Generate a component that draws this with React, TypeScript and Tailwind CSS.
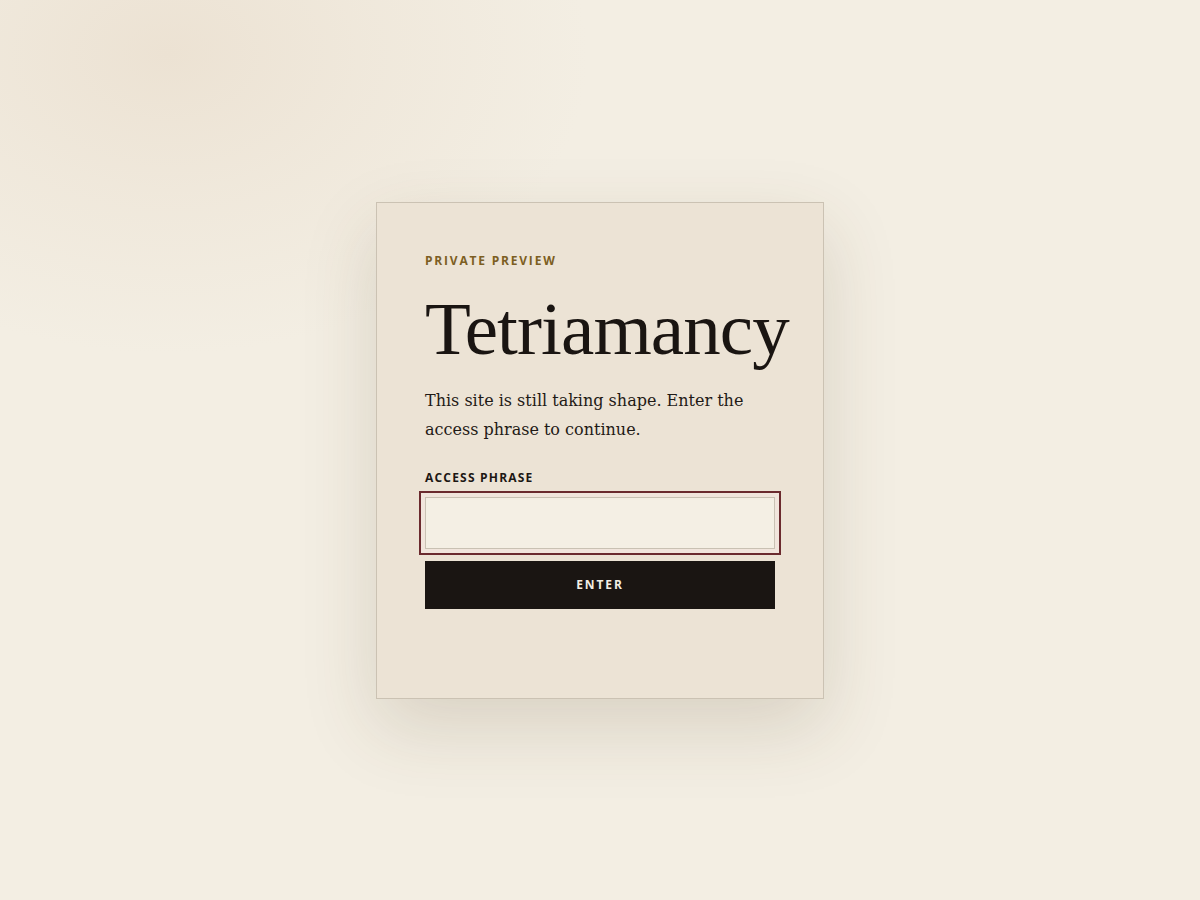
import React from "react";

export default function App() {
  return (
    <div className="min-h-[900px] w-full bg-[#f3eee3] bg-[radial-gradient(ellipse_420px_300px_at_14%_6%,#ece2d3_0%,rgba(236,226,211,0.5)_45%,rgba(243,238,227,0)_100%)] flex items-center justify-center">
      <div className="w-[448px] border border-[#cbc2b3] bg-[#ece3d5] px-[48px] pt-[50px] pb-[89px] shadow-[0_28px_70px_rgba(80,60,30,0.16)] flex flex-col">
        <div className="font-['Open_Sans','Noto_Sans',sans-serif] text-[12px] leading-[16px] font-bold tracking-[0.15em] text-[#7c5e22]">
          PRIVATE PREVIEW
        </div>
        <h1 className="mt-[22px] font-['Liberation_Serif','DejaVu_Serif',serif] text-[75px] leading-[75px] tracking-[-0.012em] text-[#1a1512] whitespace-nowrap">
          Tetriamancy
        </h1>
        <p className="mt-[20px] font-['DejaVu_Serif','Liberation_Serif',serif] text-[16px] leading-[29px] text-[#1f1a16]">
          This site is still taking shape. Enter the access phrase to continue.
        </p>
        <label className="block mt-[26px] font-['Open_Sans','Noto_Sans',sans-serif] text-[12px] leading-[16px] font-bold tracking-[0.1em] text-[#1c1714]">
          ACCESS PHRASE
        </label>
        <input
          type="password"
          className="block mt-[11px] w-full h-[52px] border border-[#c9c1b3] bg-[#f4efe4] outline-2 outline-solid outline-[#6b2a2e] outline-offset-4 shadow-[0_0_0_4px_#f1e5dc] px-3"
        />
        <button className="block mt-[12px] w-full h-[48px] bg-[#1a1512] text-[#f3eee3] font-['Open_Sans','Noto_Sans',sans-serif] text-[12px] font-bold tracking-[0.16em]">
          ENTER
        </button>
      </div>
    </div>
  );
}
